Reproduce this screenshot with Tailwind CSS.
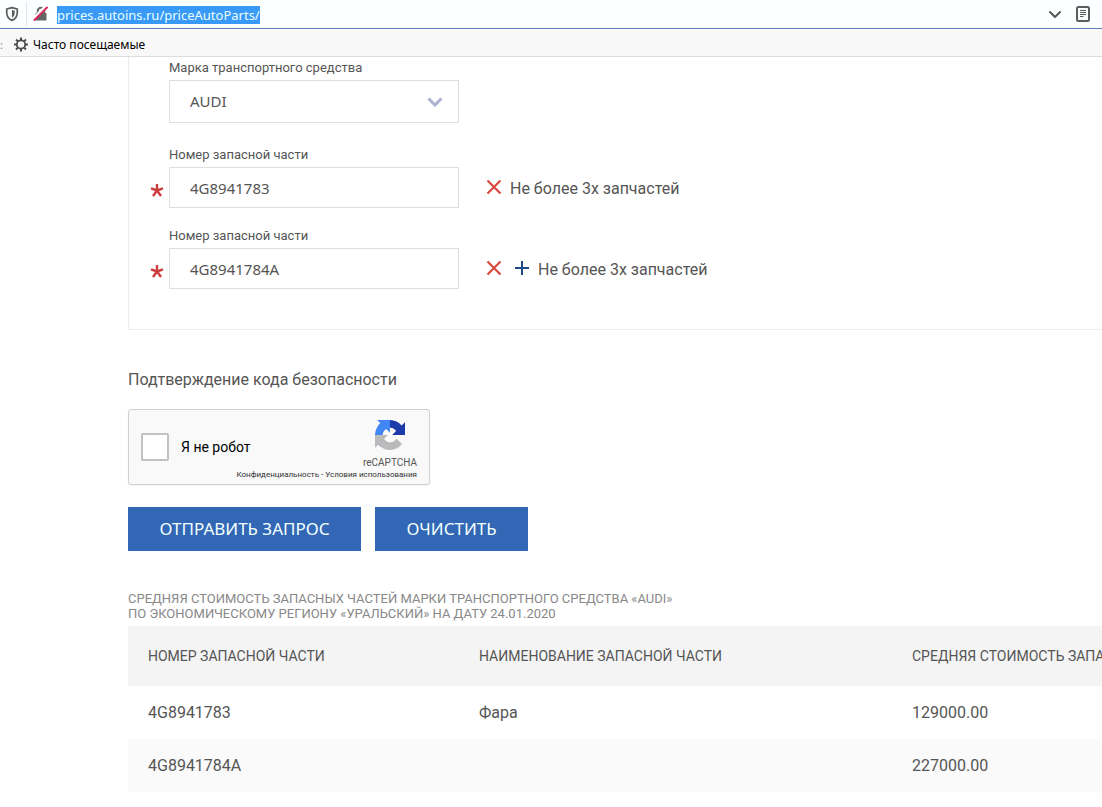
<!DOCTYPE html>
<html lang="ru">
<head>
<meta charset="utf-8">
<title>Средняя стоимость запасных частей</title>
<script src="https://cdn.jsdelivr.net/npm/@tailwindcss/browser@4"></script>
</head>
<body class="min-h-screen overflow-x-hidden bg-white font-['Roboto',sans-serif] text-[#555]">
<header class="font-['Noto_Sans',sans-serif] text-black">
  <div class="flex h-[29px] items-center border-b border-[#5b82be] bg-[#fbffff]">
    <button type="button" aria-label="Защита от отслеживания" class="flex w-[27px] border-r border-[#e2e6e6] py-1 pl-1">
      <svg class="size-4" viewBox="0 0 16 16" fill="none" stroke="#5c5c5c"><path stroke-width="1.700" stroke-linejoin="round" d="M8 1.600 L13.300 3 V6.500 C13.300 10.500 11.200 13 8 14.400 C4.800 13 2.700 10.500 2.700 6.500 V3Z"/><path fill="#5c5c5c" stroke="none" d="M8 4l2.700.700v1.800c0 2.500-.900 4.200-2.700 5.300z"/></svg>
    </button>
    <button type="button" aria-label="Соединение не защищено" class="ml-1.5 flex">
      <svg class="size-4" viewBox="0 0 16 16" fill="none"><path fill="#666" d="M2.500 7h11v7.500h-11z"/><path stroke="#666" stroke-width="2" d="M4.800 8V5a3.200 3.200 0 0 1 6.400 0v3"/><path stroke="#fbffff" stroke-width="3.600" d="M.500 13 13.500 0"/><path stroke="#d7295a" stroke-width="2" stroke-linecap="round" d="M1.500 14 14 1.500"/></svg>
    </button>
    <div class="ml-2 flex-1"><a href="#" class="inline-block bg-[#3899f7] text-[13px] leading-[18px] text-[#eaffff]">prices.autoins.ru/priceAutoParts/</a></div>
    <button type="button" aria-label="Показать историю" class="mr-3 flex">
      <svg class="size-4" viewBox="0 0 16 16" fill="none" stroke="#555" stroke-width="2" stroke-linecap="round" stroke-linejoin="round"><path d="M3 6l5 5 5-5"/></svg>
    </button>
    <button type="button" aria-label="Режим чтения" class="mr-[11px] flex">
      <svg class="size-4" viewBox="0 0 16 16" fill="none" stroke="#5c5c5c"><rect x="2" y="1" width="12" height="14" rx="1.500" stroke-width="2"/><path d="M5 4.500h6M5 6.500h6M5 8.500h6M5 10.500h3.500"/></svg>
    </button>
  </div>
  <nav class="flex h-7 items-center border-b border-[#dcdcdc] bg-[#f8f8f8] pt-1">
    <span class="w-[13px] text-[11px] leading-4 text-[#888]">:</span>
    <a href="#" class="flex items-center gap-1 text-[12px] leading-4">
      <svg class="size-4" viewBox="0 0 16 16" fill="none" stroke="#4a4a4a"><circle cx="8" cy="7.500" r="4.200" stroke-width="1.800"/><path stroke-width="2" d="M8 .500V3M8 12v2.500M1 7.500h2.500M12.500 7.500H15M3.050 2.550l1.800 1.800M11.150 10.650l1.800 1.800M3.050 12.450l1.800-1.800M11.150 4.350l1.800-1.800"/></svg>
      Часто посещаемые
    </a>
  </nav>
</header>

<main class="ml-32">
  <form>
    <section class="border-b border-l border-[#ececec] pt-px pb-10">
      <div class="flex flex-col pl-10">
        <label for="brand" class="mb-0.5 text-[13px] leading-5">Марка транспортного средства</label>
        <div class="grid w-[290px]">
          <select id="brand" class="col-start-1 row-start-1 h-[43px] appearance-none border border-[#dedede] bg-white px-5 font-['Noto_Sans',sans-serif] text-[15px]"><option>AUDI</option></select>
          <svg class="pointer-events-none col-start-1 row-start-1 mr-4 size-4 self-center justify-self-end" viewBox="0 0 16 16" fill="none" stroke="#acb3d0" stroke-width="3"><path d="M1.500 4.500 8 11l6.500-6.500"/></svg>
        </div>
      </div>

      <div class="mt-[22px] flex flex-col">
        <label for="part1" class="mb-0.5 ml-10 text-[13px] leading-5">Номер запасной части</label>
        <div class="flex items-center">
          <span class="flex w-10 justify-end pt-1 pr-1"><svg class="size-4" viewBox="0 0 16 16" fill="none" stroke="#cb3d3f" stroke-width="2.400"><path d="M8 8.500V2M8 8.500 2 6.300M8 8.500l6-2.200M8 8.500l-4 5.500M8 8.500l4 5.500"/></svg></span>
          <input id="part1" type="text" value="4G8941783" class="h-[41px] w-[290px] border border-[#dedede] px-5 font-['Noto_Sans',sans-serif] text-[15px]">
          <button type="button" aria-label="Удалить" class="ml-[27px] flex pb-0.5"><svg class="size-4" viewBox="0 0 16 16" fill="none" stroke="#d8493f" stroke-width="2.200"><path d="M1.500 1.500l13 13M14.500 1.500l-13 13"/></svg></button>
          <span class="ml-2 pt-0.5 text-[16px] leading-5">Не более 3х запчастей</span>
        </div>
      </div>

      <div class="mt-[18px] flex flex-col">
        <label for="part2" class="mb-0.5 ml-10 text-[13px] leading-5">Номер запасной части</label>
        <div class="flex items-center">
          <span class="flex w-10 justify-end pt-1 pr-1"><svg class="size-4" viewBox="0 0 16 16" fill="none" stroke="#cb3d3f" stroke-width="2.400"><path d="M8 8.500V2M8 8.500 2 6.300M8 8.500l6-2.200M8 8.500l-4 5.500M8 8.500l4 5.500"/></svg></span>
          <input id="part2" type="text" value="4G8941784A" class="h-[41px] w-[290px] border border-[#dedede] px-5 font-['Noto_Sans',sans-serif] text-[15px]">
          <button type="button" aria-label="Удалить" class="ml-[27px] flex pb-0.5"><svg class="size-4" viewBox="0 0 16 16" fill="none" stroke="#d8493f" stroke-width="2.200"><path d="M1.500 1.500l13 13M14.500 1.500l-13 13"/></svg></button>
          <button type="button" aria-label="Добавить" class="ml-3 flex pb-0.5"><svg class="size-4" viewBox="0 0 16 16" fill="none" stroke="#1f4b87" stroke-width="2"><path d="M8 1v14M1 8h14"/></svg></button>
          <span class="ml-2 pt-0.5 text-[16px] leading-5">Не более 3х запчастей</span>
        </div>
      </div>
    </section>

    <h2 class="mt-10 text-[16px] leading-5">Подтверждение кода безопасности</h2>

    <div class="mt-[19px] flex h-[76px] w-[302px] justify-between rounded-[3px] border border-[#d0d0d0] bg-[#f9f9f9] px-3 shadow-xs">
      <label class="flex items-center gap-3 text-[14px] text-black">
        <input type="checkbox" class="size-7 appearance-none rounded-[2px] border-2 border-[#c1c1c1] bg-white">
        Я не робот
      </label>
      <div class="flex w-14 flex-col items-end pt-2.5">
        <svg class="mr-3 size-[30px]" viewBox="0 0 64 64"><path fill="#1c3aa9" d="M64 31.960c0-.460-.010-.920-.030-1.380V4.610l-7.180 7.180C50.920 4.600 41.980 0 31.960 0 21.540 0 12.280 4.970 6.430 12.680L18.200 24.570a15.600 15.600 0 0 1 4.770-5.350c2.060-1.600 4.970-2.920 9-2.920.490 0 .860.060 1.140.160 4.990.400 9.320 3.150 11.870 7.150l-8.330 8.330c10.550-.040 22.470-.060 27.350.020"/><path fill="#4285f4" d="M31.860 0c-.460 0-.920.010-1.380.030H4.610l7.180 7.180C4.600 13.080 0 22.020 0 32.040c0 10.420 4.970 19.680 12.680 25.530L24.570 45.800a15.600 15.600 0 0 1-5.350-4.770c-1.600-2.060-2.920-4.970-2.920-9 0-.490.060-.860.160-1.140.400-4.990 3.150-9.320 7.150-11.870l8.330 8.330c-.040-10.550-.060-22.470-.080-27.350"/><path fill="#bababa" d="M0 32.040c0 .460.010.920.030 1.380v25.970l7.180-7.180C13.080 59.400 22.020 64 32.040 64c10.420 0 19.680-4.970 25.530-12.680L45.800 39.430a15.600 15.600 0 0 1-4.770 5.350c-2.060 1.600-4.970 2.920-9 2.920-.490 0-.860-.060-1.140-.160-4.990-.400-9.320-3.150-11.870-7.150l8.330-8.330c-10.550.040-22.470.060-27.350-.020"/></svg>
        <span class="mt-[5px] text-[10px] leading-4">reCAPTCHA</span>
        <span class="text-[8px] leading-2 whitespace-nowrap text-[#333]"><a href="#">Конфиденциальность</a> - <a href="#">Условия использования</a></span>
      </div>
    </div>

    <div class="mt-[22px] flex gap-3.5 font-['Noto_Sans',sans-serif] text-[17px] text-[#f4ffff]">
      <button type="submit" class="h-11 w-[233px] bg-[#3267b5]">ОТПРАВИТЬ ЗАПРОС</button>
      <button type="reset" class="h-11 w-[153px] bg-[#3267b5]">ОЧИСТИТЬ</button>
    </div>
  </form>

  <p class="mt-10 mb-[5px] text-[13px] leading-[15px] text-[#888]">СРЕДНЯЯ СТОИМОСТЬ ЗАПАСНЫХ ЧАСТЕЙ МАРКИ ТРАНСПОРТНОГО СРЕДСТВА «AUDI»<br>ПО ЭКОНОМИЧЕСКОМУ РЕГИОНУ «УРАЛЬСКИЙ» НА ДАТУ 24.01.2020</p>

  <div class="overflow-hidden">
    <table class="w-full min-w-[1060px] table-fixed text-left text-[16px]">
      <colgroup><col class="w-[331px]"><col class="w-[433px]"><col></colgroup>
      <thead>
        <tr class="h-[60px] bg-[#f4f4f4] text-[14px]">
          <th scope="col" class="px-5 font-normal">НОМЕР ЗАПАСНОЙ ЧАСТИ</th>
          <th scope="col" class="px-5 font-normal">НАИМЕНОВАНИЕ ЗАПАСНОЙ ЧАСТИ</th>
          <th scope="col" class="px-5 font-normal whitespace-nowrap">СРЕДНЯЯ СТОИМОСТЬ ЗАПАСНОЙ ЧАСТИ</th>
        </tr>
      </thead>
      <tbody>
        <tr class="h-[53px]"><td class="px-5">4G8941783</td><td class="px-5">Фара</td><td class="px-5">129000.00</td></tr>
        <tr class="h-[53px] bg-[#fafafa]"><td class="px-5">4G8941784A</td><td class="px-5"></td><td class="px-5">227000.00</td></tr>
      </tbody>
    </table>
  </div>
</main>
</body>
</html>
